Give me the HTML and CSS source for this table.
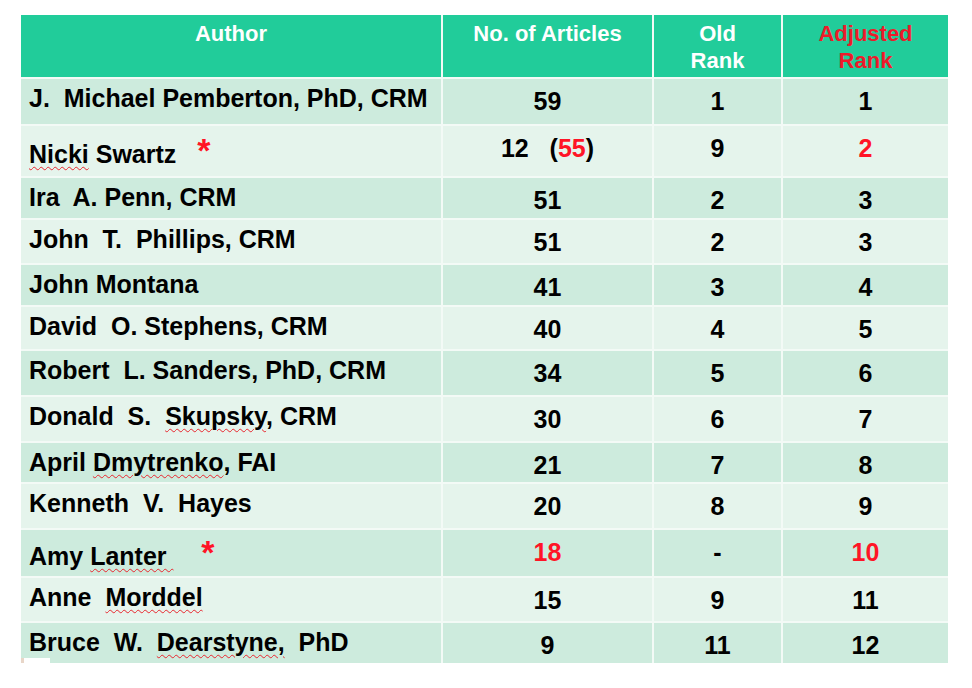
FILE: index.html
```html
<!DOCTYPE html>
<html>
<head>
<meta charset="utf-8">
<link rel="stylesheet" href="styles.css">
</head>
<body>
<div class="table">
  <div class="hd">Author</div>
  <div class="hd">No. of Articles</div>
  <div class="hd">Old<br>Rank</div>
  <div class="hd red-hd">Adjusted<br>Rank</div>

  <div class="name dark">J.  Michael Pemberton, PhD, CRM</div>
  <div class="num dark">59</div>
  <div class="num dark">1</div>
  <div class="num dark">1</div>

  <div class="name light starred"><span class="sp">Nicki</span> Swartz   <span class="star">*</span></div>
  <div class="num light">12   (<span class="red">55</span>)</div>
  <div class="num light">9</div>
  <div class="num light red">2</div>

  <div class="name dark">Ira  A. Penn, CRM</div>
  <div class="num dark">51</div>
  <div class="num dark">2</div>
  <div class="num dark">3</div>

  <div class="name light">John  T.  Phillips, CRM</div>
  <div class="num light">51</div>
  <div class="num light">2</div>
  <div class="num light">3</div>

  <div class="name dark">John Montana</div>
  <div class="num dark">41</div>
  <div class="num dark">3</div>
  <div class="num dark">4</div>

  <div class="name light">David  O. Stephens, CRM</div>
  <div class="num light">40</div>
  <div class="num light">4</div>
  <div class="num light">5</div>

  <div class="name dark">Robert  L. Sanders, PhD, CRM</div>
  <div class="num dark">34</div>
  <div class="num dark">5</div>
  <div class="num dark">6</div>

  <div class="name light">Donald  S.  <span class="sp">Skupsky</span>, CRM</div>
  <div class="num light">30</div>
  <div class="num light">6</div>
  <div class="num light">7</div>

  <div class="name dark">April <span class="sp">Dmytrenko</span>, FAI</div>
  <div class="num dark">21</div>
  <div class="num dark">7</div>
  <div class="num dark">8</div>

  <div class="name light">Kenneth  V.  Hayes</div>
  <div class="num light">20</div>
  <div class="num light">8</div>
  <div class="num light">9</div>

  <div class="name dark starred2">Amy <span class="sp">Lanter </span>    <span class="star">*</span></div>
  <div class="num dark red">18</div>
  <div class="num dark">-</div>
  <div class="num dark red">10</div>

  <div class="name light">Anne  <span class="sp">Morddel</span></div>
  <div class="num light">15</div>
  <div class="num light">9</div>
  <div class="num light">11</div>

  <div class="name dark">Bruce  W.  <span class="sp">Dearstyne,</span>  PhD</div>
  <div class="num dark">9</div>
  <div class="num dark">11</div>
  <div class="num dark">12</div>

  <div class="notch"></div>
</div>
</body>
</html>
```

FILE: styles.css
```css
html, body {
  margin: 0;
  padding: 0;
  background: #ffffff;
}

.table {
  position: relative;
  display: grid;
  grid-template-columns: 420px 209px 127px 165px;
  grid-template-rows: 62px 45px 50px 40px 43px 40px 42px 44px 44px 39px 44px 46px 43px 40px;
  gap: 2px;
  width: 927px;
  margin: 15px 0 0 21px;
  background: #f3faf6;
  font-family: "Liberation Sans", Arial, sans-serif;
}

.hd {
  background: #21cc9a;
  color: #ffffff;
  font-weight: bold;
  font-size: 22px;
  line-height: 27px;
  text-align: center;
  padding-top: 5px;
}

.red-hd {
  color: #ee1a2a;
}

.dark {
  background: #cdebdd;
}

.light {
  background: #e5f4ec;
}

.name,
.num {
  color: #000000;
  font-weight: bold;
  font-size: 25px;
  line-height: 30px;
  white-space: pre;
}

.name {
  padding: 4px 0 0 8px;
}

.num {
  text-align: center;
  padding-top: 7px;
}

.starred {
  padding-top: 13px;
}

.starred2 {
  padding-top: 11px;
}

.red {
  color: #ff1426;
}

.star {
  color: #ff1426;
  font-size: 34px;
  line-height: 0;
  vertical-align: 1px;
}

.sp {
  text-decoration: underline wavy #e8262e;
  text-decoration-thickness: 1px;
  text-underline-offset: 3px;
}

.notch {
  position: absolute;
  left: 0;
  top: 643px;
  width: 29px;
  height: 7px;
  background: #ffffff;
  border-left: 3px solid #e8d6c8;
  box-sizing: border-box;
}
```
